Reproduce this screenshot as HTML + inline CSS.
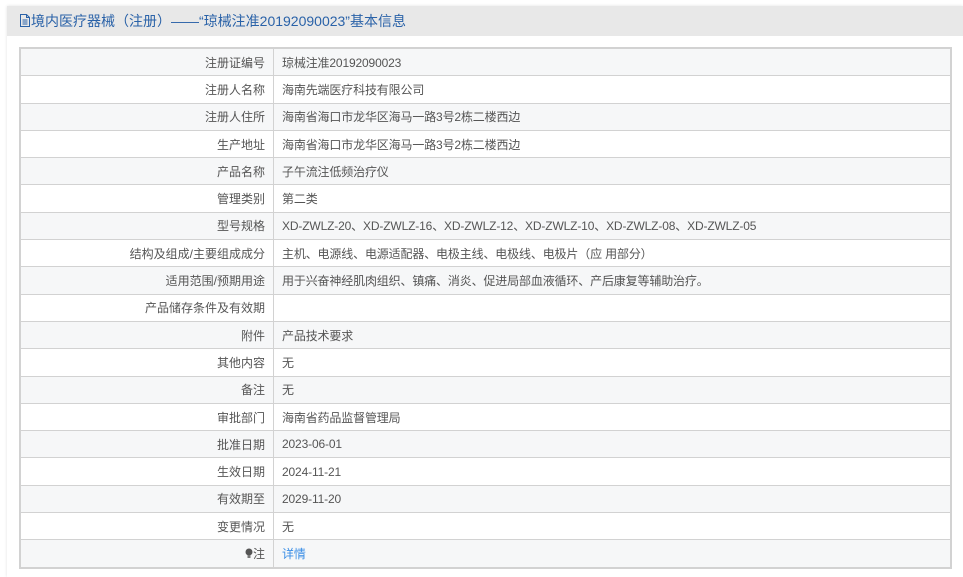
<!DOCTYPE html>
<html><head><meta charset="utf-8"><style>
body{margin:0;background:#fff;width:963px;height:577px;overflow:hidden;font-family:"Liberation Sans","Noto Sans CJK SC",sans-serif;}
.panel{position:absolute;left:7px;top:6px;width:956px;height:571px;background:#fff;box-shadow:0 0 3px rgba(0,0,0,.12);}
.hd{height:30px;background:#e8e8e8;color:#2a62a8;font-size:14px;line-height:31px;padding-left:12px;}
table{position:absolute;left:12px;top:41px;width:933px;border-collapse:collapse;border:2px solid #d2d2d2;font-size:12px;color:#555;}
td{border:1px solid #d2d2d2;height:26.3px;padding:0 8px;}
td.l{width:236px;text-align:right;}
td.v{letter-spacing:-0.15px;}
tr:nth-child(odd){background:#f6f7f8;}
a{color:#3a8ee6;text-decoration:none;}
</style></head><body>
<div class="panel">
<div class="hd"><svg width="12" height="13" viewBox="0 0 12 13" style="vertical-align:-1px"><path d="M1.5 .5h6l3 3v9h-9z M7.5 .5v3h3 M3.5 6h5 M3.5 8h5 M3.5 10h5" fill="none" stroke="#2a62a8"/></svg>境内医疗器械（注册）——“琼械注准20192090023”基本信息</div>
<table>
<tr><td class="l">注册证编号</td><td class="v">琼械注准20192090023</td></tr>
<tr><td class="l">注册人名称</td><td class="v">海南先端医疗科技有限公司</td></tr>
<tr><td class="l">注册人住所</td><td class="v">海南省海口市龙华区海马一路3号2栋二楼西边</td></tr>
<tr><td class="l">生产地址</td><td class="v">海南省海口市龙华区海马一路3号2栋二楼西边</td></tr>
<tr><td class="l">产品名称</td><td class="v">子午流注低频治疗仪</td></tr>
<tr><td class="l">管理类别</td><td class="v">第二类</td></tr>
<tr><td class="l">型号规格</td><td class="v">XD-ZWLZ-20、XD-ZWLZ-16、XD-ZWLZ-12、XD-ZWLZ-10、XD-ZWLZ-08、XD-ZWLZ-05</td></tr>
<tr><td class="l">结构及组成/主要组成成分</td><td class="v">主机、电源线、电源适配器、电极主线、电极线、电极片（应 用部分）</td></tr>
<tr><td class="l">适用范围/预期用途</td><td class="v">用于兴奋神经肌肉组织、镇痛、消炎、促进局部血液循环、产后康复等辅助治疗。</td></tr>
<tr><td class="l">产品储存条件及有效期</td><td class="v"></td></tr>
<tr><td class="l">附件</td><td class="v">产品技术要求</td></tr>
<tr><td class="l">其他内容</td><td class="v">无</td></tr>
<tr><td class="l">备注</td><td class="v">无</td></tr>
<tr><td class="l">审批部门</td><td class="v">海南省药品监督管理局</td></tr>
<tr><td class="l">批准日期</td><td class="v">2023-06-01</td></tr>
<tr><td class="l">生效日期</td><td class="v">2024-11-21</td></tr>
<tr><td class="l">有效期至</td><td class="v">2029-11-20</td></tr>
<tr><td class="l">变更情况</td><td class="v">无</td></tr>
<tr><td class="l"><svg width="8" height="11" viewBox="0 0 8 11" style="vertical-align:-1px"><circle cx="4" cy="4" r="3.5" fill="#555"/><rect x="2.5" y="7" width="3" height="3" fill="#777"/></svg>注</td><td class="v"><a>详情</a></td></tr>
</table>
</div>
</body></html>
